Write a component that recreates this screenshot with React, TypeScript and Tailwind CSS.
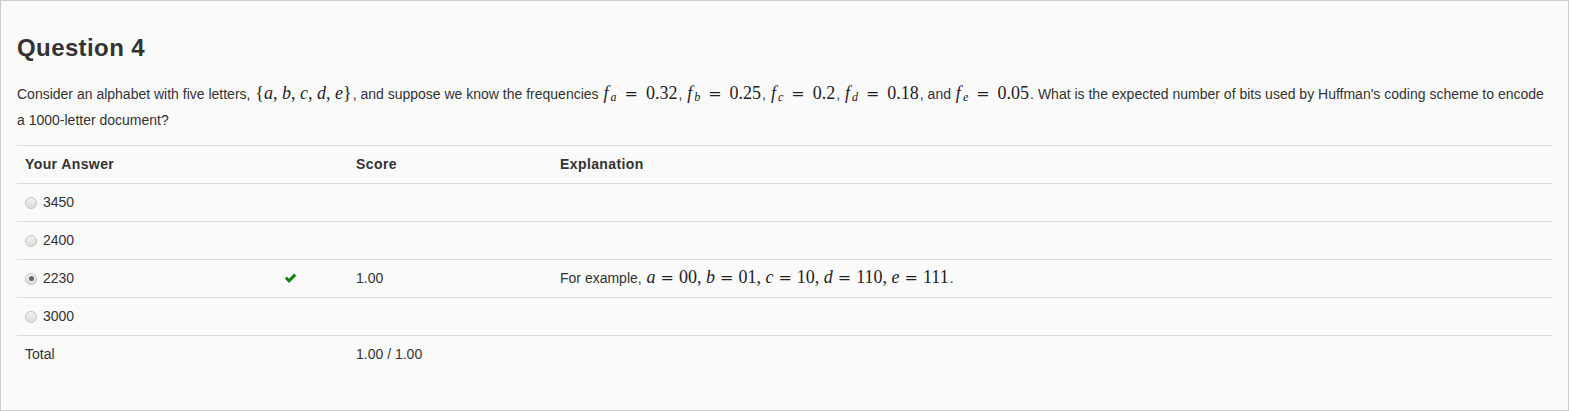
import React from "react";

const V = ({ children }: { children: React.ReactNode }) => <i className="italic">{children}</i>;
const Eq = ({ wide }: { wide?: boolean }) => (
    <span className={`${wide ? "mx-[8px]" : "mx-[5px]"} not-italic font-['DejaVu_Serif',serif] text-[16px]`}>=</span>
);
const Sub = ({ children }: { children: React.ReactNode }) => (
    <sub className="text-[12px] italic relative -bottom-[2px] align-baseline ml-[2px]">{children}</sub>
);

const Math = ({ children }: { children: React.ReactNode }) => (
    <span className="font-['Liberation_Serif',serif] text-[18px] leading-none text-[#222] px-[1px]">{children}</span>
);

const Freq = ({ l, v }: { l: string; v: string }) => (
    <Math>
        <V>f</V>
        <Sub>{l}</Sub>
        <Eq wide />
        {v}
    </Math>
);

const Radio = ({ checked }: { checked?: boolean }) => (
    <span className="inline-flex items-center justify-center w-[12px] h-[12px] rounded-full border border-[#c4c4c4] bg-gradient-to-b from-[#f2f2f2] to-[#dcdcdc] mr-[6px] shrink-0">
        {checked && <span className="w-[5px] h-[5px] rounded-full bg-[#666]" />}
    </span>
);

const Check = () => (
    <svg width="13" height="11" viewBox="0 0 13 11" aria-hidden>
        <path d="M0.8 5.6 L2.9 3.6 L5 5.8 L10.2 0.6 L12.3 2.7 L5 10 Z" fill="#0f850f" />
    </svg>
);

const Row = ({ children }: { children: React.ReactNode }) => (
    <div className="grid grid-cols-[259px_72px_204px_1fr] h-[38px] border-t border-[#dddddd] items-center">{children}</div>
);

const answers = [
    { v: "3450" },
    { v: "2400" },
    { v: "2230", checked: true },
    { v: "3000" },
];

export default function App() {
    return (
        <div className="w-[1569px] h-[411px] bg-[#fafafa] border border-[#cccccc] pt-[34px] px-4 text-[#333] font-['Liberation_Sans',Arial,sans-serif] text-[14px]">
            <h2 className="text-[24px] font-bold leading-[26px] tracking-[0.4px] text-[#333]">Question 4</h2>
            <p className="mt-[20px] leading-[26px]">
                Consider an alphabet with five letters,{" "}
                <Math>
                    {"{"}
                    <V>a</V>, <V>b</V>, <V>c</V>, <V>d</V>, <V>e</V>
                    {"}"}
                </Math>
                , and suppose we know the frequencies <Freq l="a" v="0.32" />, <Freq l="b" v="0.25" />,{" "}
                <Freq l="c" v="0.2" />, <Freq l="d" v="0.18" />, and <Freq l="e" v="0.05" />. What is the expected
                number of bits used by Huffman's coding scheme to encode{" "}
                <span className="whitespace-nowrap">a 1000-letter</span> document?
            </p>
            <div className="mt-[12px]">
                <Row>
                    <div className="px-2 font-bold tracking-[0.4px]">Your Answer</div>
                    <div />
                    <div className="px-2 font-bold tracking-[0.4px]">Score</div>
                    <div className="px-2 font-bold tracking-[0.4px]">Explanation</div>
                </Row>
                {answers.map(a => (
                    <Row key={a.v}>
                        <div className="px-2 flex items-center">
                            <Radio checked={a.checked} />
                            {a.v}
                        </div>
                        <div className="px-2 flex items-center">{a.checked && <Check />}</div>
                        <div className="px-2">{a.checked ? "1.00" : ""}</div>
                        <div className="px-2">
                            {a.checked && (
                                <>
                                    For example,{" "}
                                    <Math>
                                        <V>a</V>
                                        <Eq />
                                        00, <V>b</V>
                                        <Eq />
                                        01, <V>c</V>
                                        <Eq />
                                        10, <V>d</V>
                                        <Eq />
                                        110, <V>e</V>
                                        <Eq />
                                        111
                                    </Math>
                                    .
                                </>
                            )}
                        </div>
                    </Row>
                ))}
                <Row>
                    <div className="px-2">Total</div>
                    <div />
                    <div className="px-2">1.00 / 1.00</div>
                    <div />
                </Row>
            </div>
        </div>
    );
}
